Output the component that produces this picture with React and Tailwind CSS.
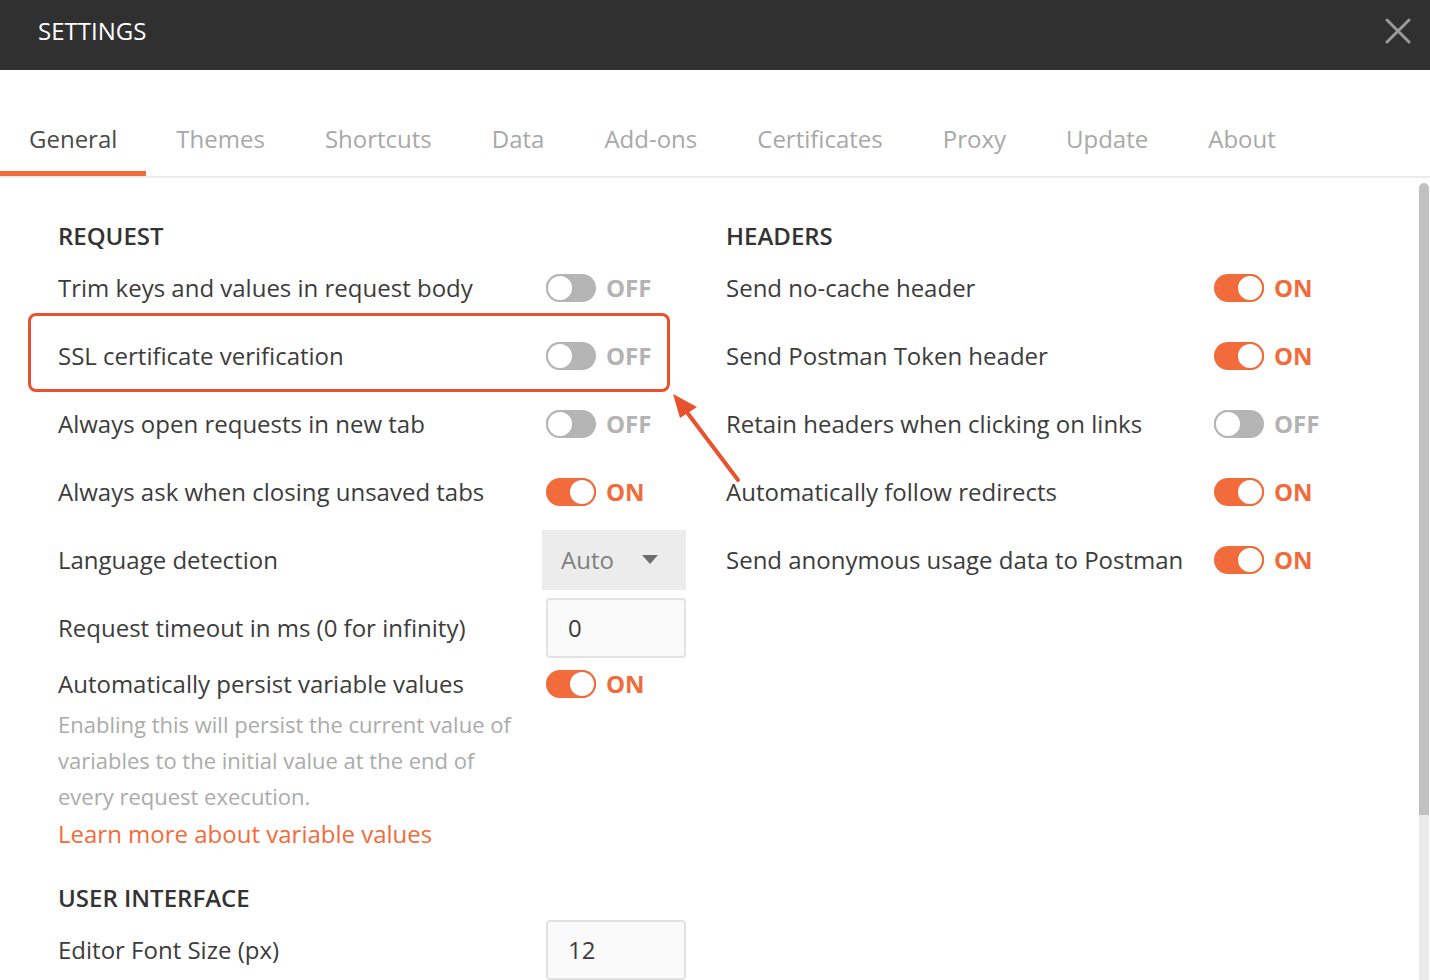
import React from "react";

// settings data
const tabs = ["General", "Themes", "Shortcuts", "Data", "Add-ons", "Certificates", "Proxy", "Update", "About"];

const headers = [
  { label: "Send no-cache header", on: true },
  { label: "Send Postman Token header", on: true },
  { label: "Retain headers when clicking on links", on: false },
  { label: "Automatically follow redirects", on: true },
  { label: "Send anonymous usage data to Postman", on: true },
];

// Toggle switch with ON / OFF label
const Toggle = ({ on }) => (
  <div className="flex items-center gap-[10px]">
    <div
      className={
        on
          ? "w-[50px] h-[28px] rounded-full bg-[#f26b3a] flex items-center justify-end"
          : "w-[50px] h-[28px] rounded-full bg-[#b5b5b5] flex items-center justify-start"
      }>
      <div
        className={
          on
            ? "w-[28px] h-[28px] rounded-full bg-white border-2 border-[#f26b3a]"
            : "w-[28px] h-[28px] rounded-full bg-white border-2 border-[#b5b5b5]"
        }
      />
    </div>
    <span className={on ? "text-[24px] font-bold text-[#f26b3a]" : "text-[24px] font-bold text-[#b3b3b3]"}>
      {on ? "ON" : "OFF"}
    </span>
  </div>
);

const Heading = ({ children }) => (
  <div className="h-[30px] leading-[30px] mb-[7px] text-[24px] font-semibold text-[#333]">{children}</div>
);

const Row = ({ label, children }) => (
  <div className="h-[60px] mb-[8px] flex items-center">
    <div className="w-[488px] text-[24px] text-[#3c3c3c] whitespace-nowrap">{label}</div>
    <div>{children}</div>
  </div>
);

export default function App() {
  return (
    <div className="relative w-[1430px] h-[980px] overflow-hidden bg-white font-['Open_Sans',sans-serif]">
      {/* title bar */}
      <div className="h-[70px] bg-[#303030] flex items-center justify-between pl-[38px] pr-[19px] pb-[8px]">
        <span className="text-[24px] text-white">SETTINGS</span>
        <svg width="26" height="26" viewBox="0 0 26 26">
          <path d="M2 2 L24 24 M24 2 L2 24" stroke="#9a9a9a" strokeWidth="3" strokeLinecap="round" />
        </svg>
      </div>

      {/* tabs */}
      <div className="h-[108px] flex items-end border-b-2 border-[#ececec]">
        {tabs.map((t, i) => (
          <div
            key={t}
            className={
              i === 0
                ? "h-[61px] px-[29px] pb-[8px] flex items-center border-b-[5px] border-[#f26b3a] text-[24px] text-[#4a4a4a]"
                : "h-[61px] px-[30px] pb-[8px] flex items-center border-b-[5px] border-transparent text-[24px] text-[#a8a8a8]"
            }>
            {t}
          </div>
        ))}
      </div>

      {/* body */}
      <div className="flex h-[802px]">
        <div className="flex-1 flex gap-[40px] pl-[58px]">
          {/* left column */}
          <div className="w-[628px] pt-[43px]">
            <Heading>REQUEST</Heading>
            <Row label="Trim keys and values in request body">
              <Toggle on={false} />
            </Row>
            <Row label="SSL certificate verification">
              <Toggle on={false} />
            </Row>
            <Row label="Always open requests in new tab">
              <Toggle on={false} />
            </Row>
            <Row label="Always ask when closing unsaved tabs">
              <Toggle on />
            </Row>
            <div className="h-[60px] mb-[8px] flex items-center">
              <div className="w-[484px] text-[24px] text-[#3c3c3c]">Language detection</div>
              <div className="w-[144px] h-[60px] bg-[#ececec] flex items-center justify-between pl-[19px] pr-[28px]">
                <span className="text-[24px] text-[#808080]">Auto</span>
                <svg width="16" height="10" viewBox="0 0 16 10">
                  <path d="M0 0 L16 0 L8 9 Z" fill="#6e6e6e" />
                </svg>
              </div>
            </div>
            <div className="h-[60px] mb-[8px] flex items-center">
              <div className="w-[488px] text-[24px] text-[#3c3c3c]">Request timeout in ms (0 for infinity)</div>
              <div className="w-[140px] h-[60px] rounded-[4px] border-2 border-[#e3e3e3] bg-[#fafafa] flex items-center pl-[20px] text-[24px] text-[#3c3c3c]">
                0
              </div>
            </div>
            <div className="h-[36px] flex items-center">
              <div className="w-[488px] text-[24px] text-[#3c3c3c]">Automatically persist variable values</div>
              <Toggle on />
            </div>
            <div className="mt-[4px] w-[465px] text-[22px] leading-[36px] text-[#ababab]">
              Enabling this will persist the current value of variables to the initial value at the end of every request
              execution.
            </div>
            <div className="mt-[2px] text-[24px] leading-[36px] text-[#f26b3a]">Learn more about variable values</div>
            <div className="mt-[31px]">
              <Heading>USER INTERFACE</Heading>
            </div>
            <div className="h-[60px] flex items-center">
              <div className="w-[488px] text-[24px] text-[#3c3c3c]">Editor Font Size (px)</div>
              <div className="w-[140px] h-[60px] rounded-[4px] border-2 border-[#e3e3e3] bg-[#fafafa] flex items-center pl-[20px] text-[24px] text-[#3c3c3c]">
                12
              </div>
            </div>
          </div>

          {/* right column */}
          <div className="w-[628px] pt-[43px]">
            <Heading>HEADERS</Heading>
            {headers.map((h) => (
              <Row key={h.label} label={h.label}>
                <Toggle on={h.on} />
              </Row>
            ))}
          </div>
        </div>

        {/* scrollbar */}
        <div className="w-[10px] flex flex-col pt-[5px] mr-[1px]">
          <div className="h-[632px] bg-[#c1c1c1] rounded-t-[5px]" />
          <div className="flex-1 bg-[#ebebeb]" />
        </div>
      </div>

      {/* annotation highlight */}
      <div className="absolute left-[28px] top-[313px] w-[642px] h-[79px] border-[3px] border-[#e8522e] rounded-[8px]" />
      <svg className="absolute left-[660px] top-[385px]" width="90" height="105" viewBox="0 0 90 105">
        <path d="M78 95 L26 26" stroke="#e8522e" strokeWidth="4" strokeLinecap="round" />
        <path d="M13 9 L37 22 L20 33 Z" fill="#e8522e" />
      </svg>
    </div>
  );
}
